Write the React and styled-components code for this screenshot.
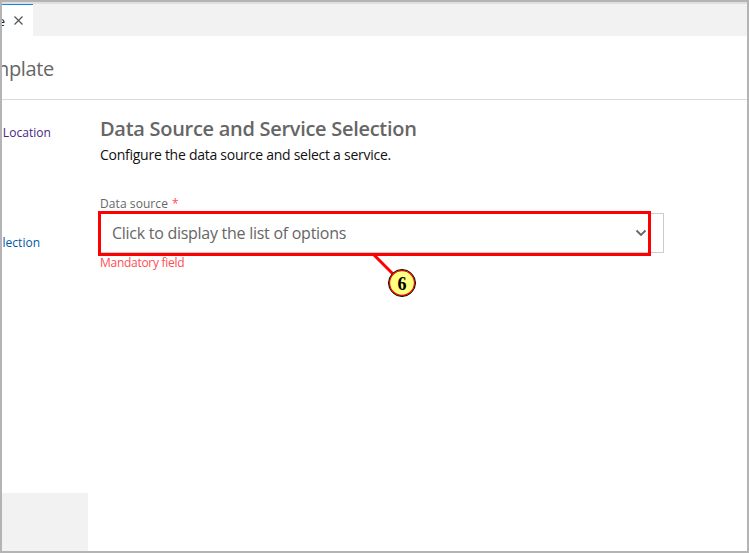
import React from "react";
import styled, { createGlobalStyle } from "styled-components";

const GlobalStyle = createGlobalStyle`
  *, *::before, *::after { box-sizing: border-box; }
  body { margin: 0; background: #fff; font-family: "Open Sans", "Noto Sans", sans-serif; }
  h1, h2, p { margin: 0; font-weight: 400; }
`;

const Window = styled.div`
  display: flex;
  flex-direction: column;
  width: 749px;
  height: 553px;
  border: 2px solid #b4b4b4;
  background: #fff;
  overflow: hidden;
  white-space: nowrap;
`;

const TabBar = styled.div`
  flex: none;
  display: flex;
  height: 34px;
  border-top: 2px solid #e0e0e0;
  background: #f2f2f2;
`;

const Tab = styled.div`
  display: flex;
  align-items: center;
  justify-content: flex-end;
  width: 31px;
  padding: 0 10px 0 0;
  gap: 9px;
  overflow: hidden;
  border-top: 1px solid #0a8ae6;
  background: #fff;
  color: #222;
  font-size: 13px;
  svg { flex: none; }
`;

const Header = styled.header`
  flex: none;
  display: flex;
  width: 100%;
  height: 64px;
  border-bottom: 1px solid #d9d9d9;
`;

const PageTitle = styled.h1`
  display: flex;
  justify-content: flex-end;
  width: 52px;
  overflow: hidden;
  color: #666;
  font-size: 20px;
  line-height: 66px;
  letter-spacing: -0.35px;
`;

const Body = styled.div`
  flex: 1;
  display: flex;
  min-height: 0;
`;

const Sidebar = styled.nav`
  flex: none;
  display: flex;
  flex-direction: column;
  width: 86px;
  padding-top: 23px;
`;

const StepLink = styled.a`
  display: flex;
  justify-content: flex-end;
  width: ${(p) => p.$width}px;
  height: 20px;
  margin-bottom: 90px;
  overflow: hidden;
  color: ${(p) => (p.$active ? "#0058a3" : "#4b2483")};
  font-size: 12px;
  line-height: 20px;
  letter-spacing: ${(p) => p.$spacing}px;
`;

const SidebarFooter = styled.div`
  height: 58px;
  margin-top: auto;
  background: #f2f2f2;
`;

const Main = styled.main`
  flex: 1;
  display: flex;
  flex-direction: column;
  align-items: flex-start;
  padding: 14px 0 0 12px;
`;

const SectionTitle = styled.h2`
  margin-bottom: 1px;
  color: #666;
  font-size: 20px;
  font-weight: 600;
  line-height: 29px;
  letter-spacing: -0.29px;
`;

const Description = styled.p`
  margin-bottom: 28px;
  color: #111;
  font-size: 14px;
  line-height: 22px;
  letter-spacing: -0.26px;
`;

const Label = styled.label`
  color: #666;
  font-size: 12px;
  line-height: 19px;
  letter-spacing: 0.08px;
  span { margin-left: 4px; color: #ff4d55; }
`;

const SelectBox = styled.div`
  position: relative;
  display: flex;
  align-items: center;
  justify-content: space-between;
  width: 564px;
  height: 40px;
  padding: 0 16px 0 11px;
  border: 1px solid #ccc;
  color: #666;
  font-size: 16px;
  line-height: 24px;
`;

const OptionText = styled.span`
  letter-spacing: -0.27px;
`;

const ErrorText = styled.p`
  color: #ff4d55;
  font-size: 12px;
  line-height: 20px;
  letter-spacing: -0.28px;
`;

const Highlight = styled.div`
  position: absolute;
  left: -3px;
  top: -3px;
  width: 553px;
  height: 45px;
  border: 3px solid #f00;
`;

const Pointer = styled.svg`
  position: absolute;
  left: 270px;
  top: 38px;
`;

const Badge = styled.div`
  position: absolute;
  left: 287px;
  top: 55px;
  display: flex;
  align-items: center;
  justify-content: center;
  width: 28px;
  height: 28px;
  padding-top: 1px;
  border: 1px solid #000;
  border-radius: 50%;
  background: #ffff80;
  box-shadow: inset 0 0 0 1.2px #f00;
  color: #000;
  font: bold 18px/26px "Liberation Serif", serif;
`;

export default function App() {
  return (
    <>
      <GlobalStyle />
      <Window>
        <TabBar>
          <Tab>
            <span>e</span>
            <svg width="9" height="9" viewBox="0 0 9 9" stroke="#555" strokeWidth="1.2">
              <path d="M.5.5l8 8M8.500.5l-8 8" />
            </svg>
          </Tab>
        </TabBar>
        <Header><PageTitle>mplate</PageTitle></Header>
        <Body>
          <Sidebar>
            <StepLink $width={49} $spacing={0.05}>Location</StepLink>
            <StepLink $width={38} $spacing={0}$active>lection</StepLink>
            <SidebarFooter />
          </Sidebar>
          <Main>
            <SectionTitle>Data Source and Service Selection</SectionTitle>
            <Description>Configure the data source and select a service.</Description>
            <Label>Data source<span>*</span></Label>
            <SelectBox>
              <OptionText>Click to display the list of options</OptionText>
              <svg width="12" height="8" viewBox="0 0 12 8" fill="none" stroke="#666" strokeWidth="1.8">
                <path d="M1.500 1.500L6 6l4.500-4.500" />
              </svg>
              <Highlight />
              <Pointer width="26" height="26" viewBox="0 0 26 26" stroke="#f00" strokeWidth="3">
                <path d="M3 3l19 19" />
              </Pointer>
              <Badge>6</Badge>
            </SelectBox>
            <ErrorText>Mandatory field</ErrorText>
          </Main>
        </Body>
      </Window>
    </>
  );
}
